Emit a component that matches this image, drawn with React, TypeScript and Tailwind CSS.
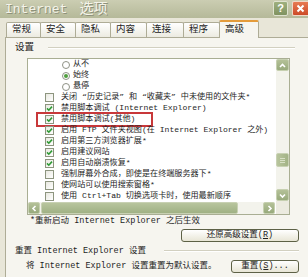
import React from 'react';

const FONT = "font-['Liberation_Mono','Noto_Sans_CJK_SC',monospace]";

const Chevron: React.FC<{ dir: 'up' | 'down' | 'left' | 'right' }> = ({ dir }) => {
  const d = {
    up: 'M2 6 L4.5 3.5 L7 6',
    down: 'M2 3.5 L4.5 6 L7 3.5',
    left: 'M5.5 2 L3 4.5 L5.5 7',
    right: 'M3.5 2 L6 4.5 L3.5 7',
  }[dir];
  return (
    <svg width="9" height="9" viewBox="0 0 9 9">
      <path d={d} stroke="#ffffff" strokeWidth="1.6" fill="none" />
    </svg>
  );
};

const ScrollBtn: React.FC<{ dir: 'up' | 'down' | 'left' | 'right'; className?: string }> = ({ dir, className }) => (
  <div
    className={`flex items-center justify-center rounded-[2px] border border-[#c6d0b0] bg-gradient-to-b from-[#b4c198] to-[#98aa7c] ${className ?? ''}`}
  >
    <Chevron dir={dir} />
  </div>
);

const Check: React.FC<{ on?: boolean }> = ({ on }) => (
  <span className="w-[9px] h-[9px] shrink-0 border border-[#8d957f] bg-gradient-to-br from-[#e8e8e0] to-white flex items-center justify-center">
    {on && (
      <svg width="7" height="7" viewBox="0 0 7 7">
        <path d="M1 3.4 L2.8 5.2 L6 1.6" stroke="#2f9b35" strokeWidth="1.6" fill="none" />
      </svg>
    )}
  </span>
);

const Radio: React.FC<{ on?: boolean }> = ({ on }) => (
  <span className="w-[8px] h-[8px] shrink-0 rounded-full border border-[#8f9286] bg-white flex items-center justify-center">
    {on && <span className="w-[4px] h-[4px] rounded-full bg-[#4f9e3e]" />}
  </span>
);

const RadioRow: React.FC<{ label: string; on?: boolean }> = ({ label, on }) => (
  <div className="h-[11px] flex items-center pl-[34px] gap-[3px] whitespace-nowrap">
    <Radio on={on} />
    <span>{label}</span>
  </div>
);

const CheckRow: React.FC<{ label: string; on?: boolean; marked?: boolean }> = ({ label, on, marked }) => (
  <div className="relative h-[11px] flex items-center pl-[17px] gap-[7px] whitespace-nowrap">
    <Check on={on} />
    <span>{label}</span>
    {marked && (
      <span className="absolute left-[8px] top-[-2px] w-[117px] h-[15px] border-2 border-[#c8383a]" />
    )}
  </div>
);

const XpButton: React.FC<{ children: React.ReactNode; className?: string }> = ({ children, className }) => (
  <div
    className={`h-[13px] flex items-center justify-center rounded-[3px] border border-[#5d6146] bg-gradient-to-b from-white to-[#e8e6d6] text-[8.5px] text-[#222] ${className ?? ''}`}
  >
    {children}
  </div>
);

const tabs = ['常规', '安全', '隐私', '内容', '连接', '程序'];
const tabWidths = ['w-[35px]', 'w-[36px]', 'w-[36px]', 'w-[37px]', 'w-[38px]', 'w-[37px]'];

export default function App() {
  return (
    <div className={`w-[308px] h-[277px] overflow-hidden bg-[#e8e6d8] flex flex-col ${FONT} text-[#1e1e1e]`}>
      {/* Title bar */}
      <div className="h-[18px] shrink-0 flex items-center bg-gradient-to-b from-[#cbcdb2] to-[#b5b999] pl-[5px]">
        <span className="text-[13px] leading-none text-[#f4f4ea] [text-shadow:1px_1px_0_#8e917a]">Internet</span>
        <span className="ml-[12px] text-[14px] leading-none text-[#f4f4ea] [text-shadow:1px_1px_0_#8e917a]">选项</span>
        <div className="ml-auto flex items-start gap-[4px] self-start pt-[1px]">
          <div className="w-[15px] h-[15px] rounded-[2px] border border-[#dfe3cf] bg-gradient-to-b from-[#9fb07f] to-[#7f9260] flex items-center justify-center text-white text-[11px] font-bold leading-none font-['Liberation_Sans',sans-serif]">
            ?
          </div>
          <div className="w-[16px] h-[15px] rounded-l-[2px] border border-r-0 border-[#f0d8c8] bg-gradient-to-b from-[#e77a52] to-[#cc4a26] flex items-center justify-center">
            <svg width="9" height="9" viewBox="0 0 9 9">
              <path d="M1.5 1.5 L7.5 7.5 M7.5 1.5 L1.5 7.5" stroke="white" strokeWidth="2" />
            </svg>
          </div>
        </div>
      </div>

      {/* Tabs */}
      <div className="h-[19px] shrink-0 flex items-end pl-[6px]">
        {tabs.map((t, i) => (
          <div
            key={t}
            className={`${tabWidths[i]} h-[15px] border border-b-0 border-[#aeac96] rounded-t-[2px] bg-gradient-to-b from-white to-[#ecebe1] text-[9.5px] leading-none flex items-center pl-[5px] ${i > 0 ? '-ml-px' : ''}`}
          >
            {t}
          </div>
        ))}
        <div className="relative z-10 -ml-px -mb-px w-[40px] h-[18px] border-x border-[#aeac96] border-t-2 border-t-[#e49b3a] rounded-t-[2px] bg-[#f6f5ef] text-[9.5px] leading-none flex items-center pl-[5px]">
          高级
        </div>
      </div>

      {/* Panel */}
      <div className="flex-1 ml-[5px] border-l border-t border-[#aeac96] bg-[#f6f5ef] pl-[9px] pt-[4px] text-[8.5px]">
        {/* Settings group header */}
        <div className="h-[12px] flex items-center gap-[14px] pr-[13px]">
          <span className="text-[9.5px] leading-none">设置</span>
          <span className="flex-1 border-t border-[#d2d0c0] border-b border-b-white" />
        </div>

        {/* Listbox */}
        <div className="mt-[4px] ml-[12px] w-[263px] h-[157px] border border-[#a9ae93] bg-white flex">
          <div className="flex-1 min-w-0 flex flex-col">
            <div className="flex-1 overflow-hidden leading-none text-[8.1px]">
              <RadioRow label="从不" />
              <RadioRow label="始终" on />
              <RadioRow label="悬停" />
              <CheckRow label="关闭 “历史记录” 和 “收藏夹” 中未使用的文件夹*" />
              <CheckRow label="禁用脚本调试 (Internet Explorer)" on />
              <CheckRow label="禁用脚本调试(其他)" on marked />
              <CheckRow label="启用 FTP 文件夹视图(在 Internet Explorer 之外)" on />
              <CheckRow label="启用第三方浏览器扩展*" on />
              <CheckRow label="启用建议网站" on />
              <CheckRow label="启用自动崩溃恢复*" on />
              <CheckRow label="强制屏幕外合成，即使是在终端服务器下*" />
              <CheckRow label="使网站可以使用搜索窗格*" />
              <CheckRow label="使用 Ctrl+Tab 切换选项卡时，使用最新顺序" />
            </div>
            {/* Horizontal scrollbar */}
            <div className="h-[12px] shrink-0 flex bg-[#f3f3ec]">
              <ScrollBtn dir="left" className="w-[12px]" />
              <div className="w-[197px] ml-px rounded-[2px] border border-[#c8d1b3] bg-gradient-to-b from-[#b8c59d] to-[#a0b184]" />
              <div className="flex-1" />
              <ScrollBtn dir="right" className="w-[12px]" />
            </div>
          </div>
          {/* Vertical scrollbar */}
          <div className="w-[13px] shrink-0 flex flex-col bg-[#f3f3ec] ml-px">
            <ScrollBtn dir="up" className="h-[12px]" />
            <div className="flex-1 flex flex-col pt-[82px]">
              <div className="h-[14px] rounded-[2px] border border-[#c8d1b3] bg-gradient-to-r from-[#b8c59d] to-[#a3b386] flex flex-col items-center justify-center gap-[1px]">
                <span className="w-[5px] border-t border-[#d8e0c6]" />
                <span className="w-[5px] border-t border-[#d8e0c6]" />
                <span className="w-[5px] border-t border-[#d8e0c6]" />
              </div>
            </div>
            <ScrollBtn dir="down" className="h-[12px]" />
            <div className="h-[13px] bg-[#ecebe0]" />
          </div>
        </div>

        {/* Restart note + restore button */}
        <div className="ml-[15px] mt-[1px] h-[10px] flex items-center whitespace-nowrap">*重新启动 Internet Explorer 之后生效</div>
        <div className="flex justify-end pr-[9px] mt-[3px]">
          <XpButton className="w-[118px]">还原高级设置(<span className="underline">R</span>)</XpButton>
        </div>

        {/* Reset group */}
        <div className="mt-[3px] h-[12px] flex items-center gap-[18px] pr-[9px] whitespace-nowrap">
          <span>重置 Internet Explorer 设置</span>
          <span className="flex-1 border-t border-[#d2d0c0] border-b border-b-white" />
        </div>
        <div className="mt-[3px] flex items-center pr-[9px] whitespace-nowrap">
          <span className="ml-[11px]">将 Internet Explorer 设置重置为默认设置。</span>
          <XpButton className="ml-auto w-[68px]">重置(<span className="underline">S</span>)...</XpButton>
        </div>
      </div>
    </div>
  );
}
